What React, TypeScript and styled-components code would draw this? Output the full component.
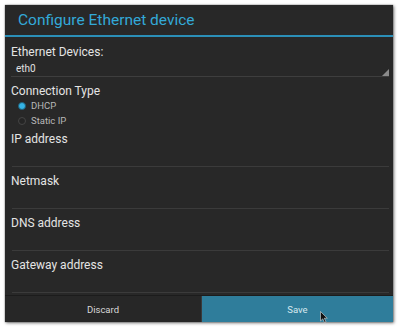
import React from 'react'
import styled, { createGlobalStyle } from 'styled-components'

const Global = createGlobalStyle`
  html, body { margin: 0; padding: 0; background: #ffffff; }
  body { font-family: Roboto, "Noto Sans", "Liberation Sans", sans-serif; }
`

const Page = styled.div`
  width: 400px;
  height: 328px;
  padding: 5px 7px 6px 5px;
  box-sizing: border-box;
  position: relative;
`

const Dialog = styled.div`
  width: 388px;
  height: 317px;
  background: #282828;
  display: flex;
  flex-direction: column;
  box-shadow: 1px 1px 3px rgba(0, 0, 0, 0.55), 0 0 1px rgba(0, 0, 0, 0.6);
`

const TitleBar = styled.div`
  height: 30px;
  display: flex;
  align-items: center;
  padding-left: 13px;
  font-size: 15.5px;
  color: #33a9d8;
  border-bottom: 2px solid #2b8fb8;
`

const Content = styled.div`
  flex: 1;
  display: flex;
  flex-direction: column;
  padding: 7px 4px 0 6px;
`

const Label = styled.div<{ $gap?: number }>`
  height: 16px;
  line-height: 16px;
  font-size: 12px;
  color: #e4e4e4;
  margin-top: ${p => p.$gap ?? 0}px;
`

const Spinner = styled.div`
  margin-top: 2px;
  height: 14px;
  line-height: 14px;
  padding-left: 5px;
  font-size: 10px;
  color: #e0e0e0;
  border-bottom: 1px solid #3e3e3e;
  position: relative;
`

const Corner = styled.svg`
  position: absolute;
  right: 0;
  bottom: 0;
`

const RadioGroup = styled.div`
  margin-top: -1px;
  display: flex;
  flex-direction: column;
`

const RadioRow = styled.div`
  height: 15px;
  display: flex;
  align-items: center;
  gap: 5px;
  padding-left: 7px;
  font-size: 9.5px;
  color: #b8b8b8;
`

const Dot = styled.span<{ $on?: boolean }>`
  width: 8px;
  height: 8px;
  border-radius: 50%;
  box-sizing: border-box;
  border: 1px solid ${p => (p.$on ? '#1f5f78' : '#454545')};
  background: ${p => (p.$on ? '#35b4e6' : '#252525')};
`

const Input = styled.div`
  height: 19px;
  margin-left: 1px;
  border-bottom: 1px solid #3b3b3b;
`

const Buttons = styled.div`
  height: 26px;
  display: flex;
  border-top: 1px solid #1c1c1c;
`

const Button = styled.div<{ $primary?: boolean }>`
  flex: ${p => (p.$primary ? '1' : '0 0 196px')};
  display: flex;
  align-items: center;
  justify-content: center;
  font-size: 9.5px;
  color: ${p => (p.$primary ? '#d6e8ef' : '#d8d8d8')};
  background: ${p => (p.$primary ? '#2f7d9b' : '#272727')};
  border-left: ${p => (p.$primary ? '1px solid #3a3a3a' : 'none')};
`

const Cursor = styled.svg`
  position: absolute;
  left: 320px;
  top: 311px;
`

const Field = ({ label }: { label: string }) => (
  <>
    <Label $gap={6}>{label}</Label>
    <Input />
  </>
)

export default function App() {
  return (
    <Page>
      <Global />
      <Dialog>
        <TitleBar>Configure Ethernet device</TitleBar>
        <Content>
          <Label>Ethernet Devices:</Label>
          <Spinner>
            eth0
            <Corner width="7" height="7" viewBox="0 0 7 7">
              <polygon points="7,0 7,7 0,7" fill="#8a8a8a" />
            </Corner>
          </Spinner>
          <Label $gap={6}>Connection Type</Label>
          <RadioGroup>
            <RadioRow><Dot $on />DHCP</RadioRow>
            <RadioRow><Dot />Static IP</RadioRow>
          </RadioGroup>
          <Label $gap={3}>IP address</Label>
          <Input />
          <Field label="Netmask" />
          <Field label="DNS address" />
          <Field label="Gateway address" />
        </Content>
        <Buttons>
          <Button>Discard</Button>
          <Button $primary>Save</Button>
        </Buttons>
      </Dialog>
      <Cursor width="8" height="12" viewBox="0 0 8 12">
        <path d="M0.5 0.5 L0.5 10 L2.8 7.8 L4.5 11.5 L6 10.8 L4.3 7.2 L7.3 7.2 Z" fill="#111" stroke="#ddd" strokeWidth="0.6" />
      </Cursor>
    </Page>
  )
}
